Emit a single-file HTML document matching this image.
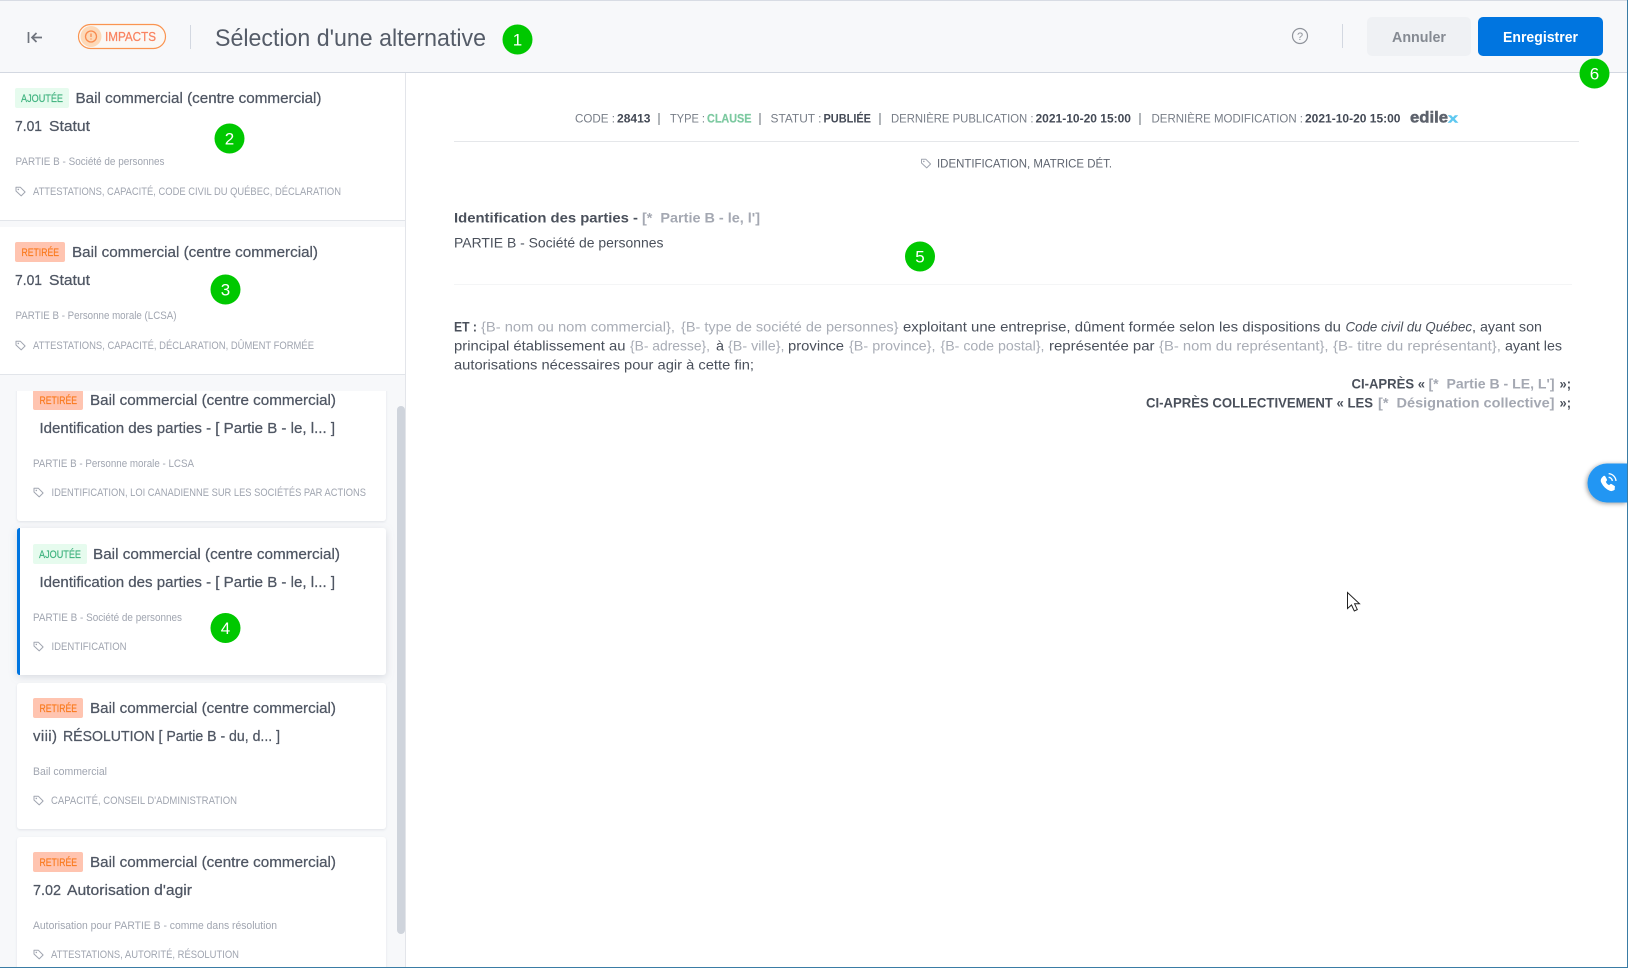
<!DOCTYPE html>
<html lang="fr"><head><meta charset="utf-8"><title>Sélection d'une alternative</title>
<style>
html,body{margin:0;padding:0;width:1628px;height:968px;overflow:hidden;background:#fff}
svg{display:block;font-family:"Liberation Sans",sans-serif}
text{white-space:pre}
.t{font-size:15px;fill:#4f5663;stroke:#4f5663;stroke-width:.25}
.l{font-size:15px;fill:#4f5663;stroke:#4f5663;stroke-width:.25}
.d{font-size:11px;fill:#a0a5b0}
.g{font-size:11px;fill:#a0a5b0}
.ba{font-size:11px;fill:#3fb37f;stroke:#3fb37f;stroke-width:.2}
.br{font-size:11px;fill:#f97a1f;stroke:#f97a1f;stroke-width:.2}
.m{font-size:12px;fill:#777d87}
.mb{font-size:12px;font-weight:700;fill:#434955}
.b{font-size:14px;fill:#4a505b}
.bg{font-size:14px;fill:#a9adb6}
.bb{font-size:14px;font-weight:700;fill:#4a505b}
.bq{font-size:14px;font-weight:700;fill:#a4a8b2}
.n{font-size:17px;fill:#fff;text-anchor:middle}
.c{fill:#00c800}
</style></head><body>
<svg width="1628" height="968" viewBox="0 0 1628 968" xmlns="http://www.w3.org/2000/svg">
<defs>
<symbol id="tag" viewBox="0 0 11 11" overflow="visible"><path d="M1 1.2h4.3l4.8 4.8-3.9 3.9-5.2-4.900z" fill="none" stroke="#a0a5b0" stroke-width="1" stroke-linejoin="round"/><circle cx="3.3" cy="3.4" r=".8" fill="#a0a5b0"/></symbol>
<clipPath id="list"><rect x="0" y="391" width="396" height="577"/></clipPath>
<filter id="sh" x="-10%" y="-10%" width="120%" height="120%"><feDropShadow dx="0" dy="1" stdDeviation="1.2" flood-color="#aab2c0" flood-opacity=".3"/></filter>
<filter id="sh2" x="-10%" y="-10%" width="120%" height="125%"><feDropShadow dx="0" dy="2" stdDeviation="4" flood-color="#8a94a6" flood-opacity=".3"/></filter>
<filter id="sh3" x="-30%" y="-30%" width="150%" height="160%"><feDropShadow dx="-1" dy="1" stdDeviation="2.5" flood-color="#000" flood-opacity=".4"/></filter>
</defs>

<rect width="1628" height="968" fill="#fff"/>

<!-- Sidebar -->
<rect x="0" y="73" width="405" height="895" fill="#f7f8fa"/>
<rect x="405" y="73" width="1" height="895" fill="#e3e5ea"/>
<rect x="0" y="73" width="405" height="147" fill="#fff"/><rect x="0" y="220" width="405" height="1" fill="#e2e5ea"/>
<rect x="0" y="227" width="405" height="147" fill="#fff"/><rect x="0" y="374" width="405" height="1" fill="#e2e5ea"/>

<!-- Item 1 -->
<rect x="15" y="88" width="54" height="20" rx="2" fill="#e6fbee"/>
<text class="ba" x="21" y="102" textLength="42" lengthAdjust="spacingAndGlyphs">AJOUTÉE</text>
<text class="t" x="75.5" y="103" textLength="246" lengthAdjust="spacingAndGlyphs">Bail commercial (centre commercial)</text>
<text class="l" x="15" y="131" textLength="27" lengthAdjust="spacingAndGlyphs">7.01</text>
<text class="l" x="49" y="131" textLength="41" lengthAdjust="spacingAndGlyphs">Statut</text>
<text class="d" x="15.5" y="165" textLength="149" lengthAdjust="spacingAndGlyphs">PARTIE B - Société de personnes</text>
<use href="#tag" x="15" y="186" width="11" height="11"/>
<text class="g" x="33" y="195" textLength="308" lengthAdjust="spacingAndGlyphs">ATTESTATIONS, CAPACITÉ, CODE CIVIL DU QUÉBEC, DÉCLARATION</text>

<!-- Item 2 -->
<rect x="15" y="242" width="50" height="20" rx="2" fill="#ffc4b0"/>
<text class="br" x="21.5" y="256" textLength="37.5" lengthAdjust="spacingAndGlyphs">RETIRÉE</text>
<text class="t" x="72" y="257" textLength="246" lengthAdjust="spacingAndGlyphs">Bail commercial (centre commercial)</text>
<text class="l" x="15" y="285" textLength="27" lengthAdjust="spacingAndGlyphs">7.01</text>
<text class="l" x="49" y="285" textLength="41" lengthAdjust="spacingAndGlyphs">Statut</text>
<text class="d" x="15.5" y="319" textLength="161" lengthAdjust="spacingAndGlyphs">PARTIE B - Personne morale (LCSA)</text>
<use href="#tag" x="15" y="340" width="11" height="11"/>
<text class="g" x="33" y="349" textLength="281" lengthAdjust="spacingAndGlyphs">ATTESTATIONS, CAPACITÉ, DÉCLARATION, DÛMENT FORMÉE</text>

<!-- List -->
<g clip-path="url(#list)">
<rect x="17" y="370" width="369" height="151" rx="3" fill="#fff" filter="url(#sh)"/>
<rect x="33" y="390" width="50" height="20" rx="2" fill="#ffc4b0"/>
<text class="br" x="39.5" y="404" textLength="37.5" lengthAdjust="spacingAndGlyphs">RETIRÉE</text>
<text class="t" x="90" y="405" textLength="246" lengthAdjust="spacingAndGlyphs">Bail commercial (centre commercial)</text>
<text class="l" x="39.5" y="433" textLength="295.5" lengthAdjust="spacingAndGlyphs">Identification des parties - [ Partie B - le, l... ]</text>
<text class="d" x="33" y="467" textLength="161" lengthAdjust="spacingAndGlyphs">PARTIE B - Personne morale - LCSA</text>
<use href="#tag" x="33" y="487" width="11" height="11"/>
<text class="g" x="51.5" y="496" textLength="314.5" lengthAdjust="spacingAndGlyphs">IDENTIFICATION, LOI CANADIENNE SUR LES SOCIÉTÉS PAR ACTIONS</text>

<rect x="17" y="528" width="369" height="147" rx="3" fill="#fff" filter="url(#sh2)"/>
<path d="M20 528h-.5a3 3 0 0 0-2.500 3v141a3 3 0 0 0 2.500 3h.5z" fill="#0075e0"/>
<rect x="33" y="544" width="54" height="20" rx="2" fill="#e6fbee"/>
<text class="ba" x="39" y="558" textLength="42" lengthAdjust="spacingAndGlyphs">AJOUTÉE</text>
<text class="t" x="93" y="559" textLength="247" lengthAdjust="spacingAndGlyphs">Bail commercial (centre commercial)</text>
<text class="l" x="39.5" y="587" textLength="295.5" lengthAdjust="spacingAndGlyphs">Identification des parties - [ Partie B - le, l... ]</text>
<text class="d" x="33" y="621" textLength="149" lengthAdjust="spacingAndGlyphs">PARTIE B - Société de personnes</text>
<use href="#tag" x="33" y="641" width="11" height="11"/>
<text class="g" x="51.5" y="650" textLength="75" lengthAdjust="spacingAndGlyphs">IDENTIFICATION</text>

<rect x="17" y="683" width="369" height="146" rx="3" fill="#fff" filter="url(#sh)"/>
<rect x="33" y="698" width="50" height="20" rx="2" fill="#ffc4b0"/>
<text class="br" x="39.5" y="712" textLength="37.5" lengthAdjust="spacingAndGlyphs">RETIRÉE</text>
<text class="t" x="90" y="713" textLength="246" lengthAdjust="spacingAndGlyphs">Bail commercial (centre commercial)</text>
<text class="l" x="33" y="741" textLength="24" lengthAdjust="spacing">viii)</text>
<text class="l" x="63" y="741" textLength="217" lengthAdjust="spacingAndGlyphs">RÉSOLUTION [ Partie B - du, d... ]</text>
<text class="d" x="33" y="775" textLength="74" lengthAdjust="spacingAndGlyphs">Bail commercial</text>
<use href="#tag" x="33" y="795" width="11" height="11"/>
<text class="g" x="51" y="804" textLength="186" lengthAdjust="spacingAndGlyphs">CAPACITÉ, CONSEIL D'ADMINISTRATION</text>

<rect x="17" y="837" width="369" height="150" rx="3" fill="#fff" filter="url(#sh)"/>
<rect x="33" y="852" width="50" height="20" rx="2" fill="#ffc4b0"/>
<text class="br" x="39.5" y="866" textLength="37.5" lengthAdjust="spacingAndGlyphs">RETIRÉE</text>
<text class="t" x="90" y="867" textLength="246" lengthAdjust="spacingAndGlyphs">Bail commercial (centre commercial)</text>
<text class="l" x="33" y="895" textLength="28" lengthAdjust="spacingAndGlyphs">7.02</text>
<text class="l" x="67" y="895" textLength="125" lengthAdjust="spacingAndGlyphs">Autorisation d'agir</text>
<text class="d" x="33" y="929" textLength="244" lengthAdjust="spacingAndGlyphs">Autorisation pour PARTIE B - comme dans résolution</text>
<use href="#tag" x="33" y="949" width="11" height="11"/>
<text class="g" x="51" y="958" textLength="188" lengthAdjust="spacingAndGlyphs">ATTESTATIONS, AUTORITÉ, RÉSOLUTION</text>
</g>
<rect x="397" y="406" width="8" height="528" rx="4" fill="#cfd4dc"/>

<!-- Header -->
<rect x="0" y="0" width="1628" height="72" fill="#f7f8fa"/>
<rect x="0" y="0" width="1628" height="1" fill="#d8dce4"/>
<rect x="0" y="72" width="1628" height="1" fill="#d3d8e1"/>
<path d="M28.500 32v11M42 37.500H32M36.500 33l-4.500 4.500 4.500 4.500" fill="none" stroke="#6f747d" stroke-width="1.700"/>
<rect x="78.500" y="24.500" width="87" height="24" rx="12" fill="#fbf8f5" stroke="#fa9450" stroke-width="1.200"/>
<circle cx="91" cy="36.500" r="10.500" fill="#fdd9b8"/>
<circle cx="91" cy="36.500" r="5.500" fill="none" stroke="#f98b4f" stroke-width="1.300"/>
<path d="M91 33.500v3.500M91 38.500v1" stroke="#f98b4f" stroke-width="1.300"/>
<text x="105" y="41" font-size="13" fill="#f98360" stroke="#f98360" stroke-width=".25" textLength="51" lengthAdjust="spacingAndGlyphs">IMPACTS</text>
<rect x="190" y="25" width="1" height="24" fill="#d3d8e1"/>
<text x="215" y="46" font-size="24" fill="#555c68" textLength="271" lengthAdjust="spacingAndGlyphs">Sélection d'une alternative</text>
<circle cx="1300" cy="36" r="7.500" fill="none" stroke="#8f939b" stroke-width="1.200"/>
<text x="1300" y="40" font-size="11" fill="#8f939b" text-anchor="middle">?</text>
<rect x="1342" y="24" width="1" height="24" fill="#d3d8e1"/>
<rect x="1367" y="17" width="104" height="39" rx="5" fill="#eff1f4"/>
<text x="1392" y="42" font-size="15" font-weight="700" fill="#858a92" textLength="54" lengthAdjust="spacingAndGlyphs">Annuler</text>
<rect x="1478" y="17" width="125" height="39" rx="5" fill="#0075e0"/>
<text x="1503" y="42" font-size="15" font-weight="700" fill="#fff" textLength="75" lengthAdjust="spacingAndGlyphs">Enregistrer</text>

<!-- Main meta -->
<text class="m" x="575" y="122.500" textLength="40" lengthAdjust="spacingAndGlyphs">CODE :</text>
<text class="mb" x="617" y="122.500" textLength="33.500" lengthAdjust="spacingAndGlyphs">28413</text>
<rect x="658.500" y="113" width="1" height="12" fill="#666c76"/>
<text class="m" x="670" y="122.500" textLength="35" lengthAdjust="spacingAndGlyphs">TYPE :</text>
<text x="707" y="122.500" font-size="12" font-weight="700" fill="#7cc9a0" stroke="#7cc9a0" stroke-width=".2" textLength="44.500" lengthAdjust="spacingAndGlyphs">CLAUSE</text>
<rect x="759.500" y="113" width="1" height="12" fill="#666c76"/>
<text class="m" x="770.500" y="122.500" textLength="51" lengthAdjust="spacingAndGlyphs">STATUT :</text>
<text class="mb" x="823.500" y="122.500" textLength="47.500" lengthAdjust="spacingAndGlyphs">PUBLIÉE</text>
<rect x="879.500" y="113" width="1" height="12" fill="#666c76"/>
<text class="m" x="891" y="122.500" textLength="142.500" lengthAdjust="spacingAndGlyphs">DERNIÈRE PUBLICATION :</text>
<text class="mb" x="1035.500" y="122.500" textLength="95.500" lengthAdjust="spacingAndGlyphs">2021-10-20 15:00</text>
<rect x="1139.500" y="113" width="1" height="12" fill="#666c76"/>
<text class="m" x="1151.500" y="122.500" textLength="151.500" lengthAdjust="spacingAndGlyphs">DERNIÈRE MODIFICATION :</text>
<text class="mb" x="1305" y="122.500" textLength="95.500" lengthAdjust="spacingAndGlyphs">2021-10-20 15:00</text>
<text x="1410" y="122.500" font-size="16" font-weight="700" fill="#5d626c" stroke="#5d626c" stroke-width=".5" textLength="38" lengthAdjust="spacingAndGlyphs">edile</text>
<text x="1448" y="122.500" font-size="13" font-weight="700" fill="#5ec8f0" stroke="#5ec8f0" stroke-width=".4" textLength="10" lengthAdjust="spacingAndGlyphs">x</text>
<rect x="454" y="141" width="1125" height="1" fill="#e5e7ea"/>
<use href="#tag" x="920.500" y="158" width="11" height="11"/>
<text class="m" x="937" y="167.500" textLength="175" lengthAdjust="spacingAndGlyphs" style="fill:#5f6570">IDENTIFICATION, MATRICE DÉT.</text>

<!-- Heading -->
<text class="bb" x="454" y="222.500" textLength="184" lengthAdjust="spacingAndGlyphs">Identification des parties -</text>
<text class="bq" x="642" y="222.500" textLength="118" lengthAdjust="spacingAndGlyphs">[*  Partie B - le, l']</text>
<text class="b" x="454" y="247.500" textLength="209.500" lengthAdjust="spacingAndGlyphs">PARTIE B - Société de personnes</text>
<rect x="454" y="284" width="1118" height="1" fill="#f4f5f6"/>

<!-- Body -->
<text class="bb" x="454" y="331.500" textLength="23" lengthAdjust="spacingAndGlyphs">ET :</text>
<text class="bg" x="481" y="331.500" textLength="194" lengthAdjust="spacingAndGlyphs">{B- nom ou nom commercial},</text>
<text class="bg" x="681" y="331.500" textLength="217.500" lengthAdjust="spacingAndGlyphs">{B- type de société de personnes}</text>
<text class="b" x="903" y="331.500" textLength="438" lengthAdjust="spacingAndGlyphs">exploitant une entreprise, dûment formée selon les dispositions du</text>
<text class="b" x="1345.500" y="331.500" font-style="italic" textLength="126.500" lengthAdjust="spacingAndGlyphs">Code civil du Québec</text>
<text class="b" x="1472" y="331.500" textLength="70" lengthAdjust="spacingAndGlyphs">, ayant son</text>

<text class="b" x="454" y="350.500" textLength="171.500" lengthAdjust="spacingAndGlyphs">principal établissement au</text>
<text class="bg" x="630" y="350.500" textLength="80" lengthAdjust="spacingAndGlyphs">{B- adresse},</text>
<text class="b" x="716" y="350.500" textLength="8" lengthAdjust="spacingAndGlyphs">à</text>
<text class="bg" x="728" y="350.500" textLength="56.500" lengthAdjust="spacingAndGlyphs">{B- ville},</text>
<text class="b" x="788" y="350.500" textLength="56" lengthAdjust="spacingAndGlyphs">province</text>
<text class="bg" x="849" y="350.500" textLength="86.500" lengthAdjust="spacingAndGlyphs">{B- province},</text>
<text class="bg" x="940.500" y="350.500" textLength="104" lengthAdjust="spacingAndGlyphs">{B- code postal},</text>
<text class="b" x="1049" y="350.500" textLength="105.500" lengthAdjust="spacingAndGlyphs">représentée par</text>
<text class="bg" x="1159" y="350.500" textLength="169.500" lengthAdjust="spacingAndGlyphs">{B- nom du représentant},</text>
<text class="bg" x="1333" y="350.500" textLength="168" lengthAdjust="spacingAndGlyphs">{B- titre du représentant},</text>
<text class="b" x="1505" y="350.500" textLength="57" lengthAdjust="spacingAndGlyphs">ayant les</text>

<text class="b" x="454" y="369.500" textLength="300" lengthAdjust="spacingAndGlyphs">autorisations nécessaires pour agir à cette fin;</text>

<text class="bb" x="1351.500" y="388.500" textLength="73.500" lengthAdjust="spacingAndGlyphs">CI-APRÈS «</text>
<text class="bq" x="1428.500" y="388.500" textLength="126" lengthAdjust="spacingAndGlyphs">[*  Partie B - LE, L']</text>
<text class="bb" x="1559.500" y="388.500" textLength="11.500" lengthAdjust="spacingAndGlyphs">»;</text>
<text class="bb" x="1146" y="407.500" textLength="227" lengthAdjust="spacingAndGlyphs">CI-APRÈS COLLECTIVEMENT « LES</text>
<text class="bq" x="1378" y="407.500" textLength="176.500" lengthAdjust="spacingAndGlyphs">[*  Désignation collective]</text>
<text class="bb" x="1559.500" y="407.500" textLength="11.500" lengthAdjust="spacingAndGlyphs">»;</text>

<!-- Phone widget -->
<path d="M1627 463.500h-20a19.500 19.500 0 0 0 0 39h20z" fill="#2196f3" filter="url(#sh3)"/>
<path transform="translate(1595 471) scale(1.050)" fill="#fff" stroke="#fff" stroke-width=".7" stroke-linejoin="round" d="M18.500 17.500c-.9.9-2.600 1.700-4.300 1-3.200-1.300-6.300-4.400-7.900-7.600-.8-1.700-.4-3.400.5-4.400l1.400-1.400c.4-.4 1-.3 1.300.2l1.500 2.700c.2.400.2.800-.1 1.100l-1 1.100c.6 1.500 2 3 3.600 3.700l1.100-1c.3-.3.8-.3 1.100-.1l2.600 1.700c.5.300.5.900.1 1.300z"/>
<path transform="translate(1595 471) scale(1.050)" fill="none" stroke="#fff" stroke-width="1.300" d="M13 2.500c3.800.3 6.700 3.200 7 7M13 6c1.900.2 3.300 1.600 3.500 3.500"/>

<!-- Cursor -->
<path d="M1347.500 592.500v16l4-3.500 2.800 6 3-1.400-2.700-5.800h4.900z" fill="#fff" stroke="#222" stroke-width="1"/>

<!-- Annotation circles -->
<circle class="c" cx="517.500" cy="39.500" r="15"/><text class="n" x="517.500" y="45.500">1</text>
<circle class="c" cx="229.500" cy="138.500" r="15"/><text class="n" x="229.500" y="144.500">2</text>
<circle class="c" cx="225.500" cy="289.500" r="15"/><text class="n" x="225.500" y="295.500">3</text>
<circle class="c" cx="225.500" cy="628" r="15"/><text class="n" x="225.500" y="634">4</text>
<circle class="c" cx="920" cy="256.500" r="15"/><text class="n" x="920" y="262.500">5</text>
<circle class="c" cx="1594.500" cy="73.500" r="15"/><text class="n" x="1594.500" y="79.500">6</text>

<!-- Window edge -->
<rect x="1627" y="0" width="1" height="968" fill="#3a7ca5"/>
<rect x="0" y="967" width="1628" height="1" fill="#3a7ca5"/>
</svg>
</body></html>
